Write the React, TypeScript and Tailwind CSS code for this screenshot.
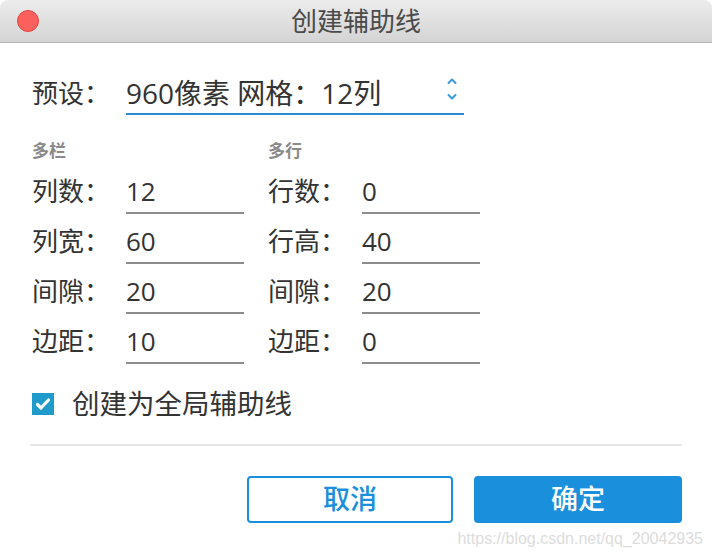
import React from 'react';

const font = { fontFamily: '"Open Sans", "Noto Sans CJK SC", sans-serif' };

function Field({ label, value }: { label: string; value: string }) {
  return (
    <div className="flex items-end h-[50px]">
      <div className="w-[94px] text-[26px] leading-[40px] text-[#333] pb-[3px]">{label}</div>
      <div className="w-[118px] border-b-2 border-[#8c8c8c] text-[26px] leading-[40px] pb-[1px] text-[#333]">{value}</div>
    </div>
  );
}

function Chevrons() {
  return (
    <svg width="12" height="26" viewBox="0 0 12 26" fill="none" stroke="#3a9ad9" strokeWidth="2" strokeLinecap="round" strokeLinejoin="round">
      <path d="M2.5 7 L6 3.5 L9.5 7" />
      <path d="M2.5 19 L6 22.5 L9.5 19" />
    </svg>
  );
}

export default function App() {
  const cols = [
    { title: '多栏', rows: [['列数：', '12'], ['列宽：', '60'], ['间隙：', '20'], ['边距：', '10']] },
    { title: '多行', rows: [['行数：', '0'], ['行高：', '40'], ['间隙：', '20'], ['边距：', '0']] },
  ];

  return (
    <div className="w-[712px] h-[554px] bg-white relative overflow-hidden" style={font}>
      {/* title bar */}
      <div className="relative h-[43px] flex items-center justify-center rounded-t-[8px] bg-gradient-to-b from-[#ececec] to-[#d4d4d4] border-b border-[#b5b5b5]">
        <div className="absolute left-[17px] top-[10px] w-[22px] h-[22px] rounded-full bg-[#fc605c] border border-[#e0443e]" />
        <div className="text-[26px] text-[#4a4a4a] leading-none -mt-[1px]">创建辅助线</div>
      </div>

      <div className="px-[32px] pt-[30px]">
        {/* preset */}
        <div className="flex items-end">
          <div className="w-[94px] text-[26px] leading-[40px] text-[#333] pb-[2px]">预设：</div>
          <div className="relative w-[338px] border-b-2 border-[#2a8bd0]">
            <span className="block text-[28px] leading-[40px] text-[#333]">960像素 网格：12列</span>
            <div className="absolute right-[6px] top-[3px]">
              <Chevrons />
            </div>
          </div>
        </div>

        {/* columns / rows */}
        <div className="flex gap-[24px] mt-[23px]">
          {cols.map((c) => (
            <div key={c.title} className="flex flex-col">
              <div className="h-[26px] text-[17px] leading-[26px] font-semibold text-[#8a8a8a]">{c.title}</div>
              {c.rows.map(([l, v]) => (
                <Field key={l} label={l} value={v} />
              ))}
            </div>
          ))}
        </div>

        {/* checkbox */}
        <div className="flex items-center h-[40px] mt-[20px] gap-[18px]">
          <div className="w-[22px] h-[22px] bg-[#1e9bcb] flex items-center justify-center">
            <svg width="16" height="14" viewBox="0 0 16 14" fill="none" stroke="white" strokeWidth="3.2" strokeLinecap="round" strokeLinejoin="round">
              <path d="M2.5 7.5 L6 11 L13.5 3" />
            </svg>
          </div>
          <span className="text-[27.5px] leading-none text-[#333]">创建为全局辅助线</span>
        </div>
      </div>

      <div className="mx-[30px] mt-[20px] h-[2px] bg-[#e6e6e6]" />

      {/* buttons */}
      <div className="flex justify-end gap-[21px] pr-[30px] mt-[30px]">
        <button className="w-[206px] h-[47px] rounded-[4px] border-2 border-[#1a8fdc] bg-white text-[#1a8fdc] text-[27px] font-medium">取消</button>
        <button className="w-[208px] h-[47px] rounded-[4px] bg-[#1a8fdc] text-white text-[27px] font-medium">确定</button>
      </div>

      <div className="absolute right-[9px] bottom-[7px] text-[16px] leading-none text-[#dcdcdc]" style={{ fontFamily: '"Liberation Sans", Arial, sans-serif' }}>
        https://blog.csdn.net/qq_20042935
      </div>
    </div>
  );
}
